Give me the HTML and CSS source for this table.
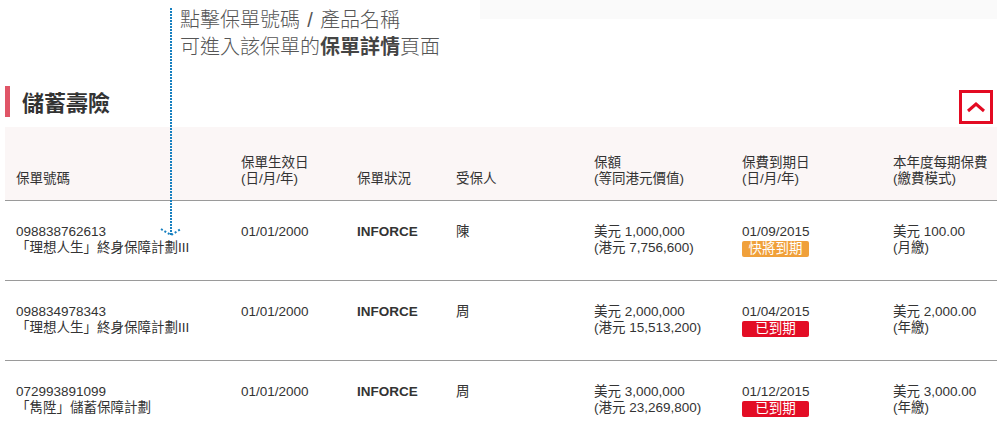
FILE: index.html
```html
<!DOCTYPE html>
<html lang="zh-Hant">
<head>
<meta charset="utf-8">
<title>儲蓄壽險</title>
<link rel="stylesheet" href="styles.css">
</head>
<body>
<div class="page">
  <div class="top-shade"></div>
  <div class="annotation">
    <div class="note">點擊保單號碼<span class="slash">/</span>產品名稱</div>
    <div class="note">可進入該保單的<b>保單詳情</b>頁面</div>
    <svg class="pointer" width="24" height="236" viewBox="0 0 24 236">
      <line x1="11" y1="2" x2="11" y2="229" stroke="#1780c0" stroke-width="2" stroke-dasharray="2 1"/>
      <polyline points="1,223 11,229 21,223" fill="none" stroke="#1780c0" stroke-width="2" stroke-dasharray="2 2"/>
    </svg>
  </div>

  <section class="section">
    <div class="section-head">
      <h2 class="title">儲蓄壽險</h2>
      <button class="toggle" aria-label="收起">
        <svg width="20" height="12" viewBox="0 0 20 12"><polyline points="2,10 10,3 18,10" fill="none" stroke="#e30b22" stroke-width="3"/></svg>
      </button>
    </div>

    <table class="policies">
      <colgroup>
        <col class="c1"><col class="c2"><col class="c3"><col class="c4"><col class="c5"><col class="c6"><col class="c7">
      </colgroup>
      <thead>
        <tr>
          <th>保單號碼</th>
          <th>保單生效日<br>(日/月/年)</th>
          <th>保單狀況</th>
          <th>受保人</th>
          <th>保額<br>(等同港元價值)</th>
          <th>保費到期日<br>(日/月/年)</th>
          <th>本年度每期保費<br>(繳費模式)</th>
        </tr>
      </thead>
      <tbody>
        <tr>
          <td>098838762613<br>「理想人生」終身保障計劃III</td>
          <td>01/01/2000</td>
          <td class="status">INFORCE</td>
          <td>陳</td>
          <td>美元 1,000,000<br>(港元 7,756,600)</td>
          <td>01/09/2015<span class="badge soon">快將到期</span></td>
          <td>美元 100.00<br>(月繳)</td>
        </tr>
        <tr>
          <td>098834978343<br>「理想人生」終身保障計劃III</td>
          <td>01/01/2000</td>
          <td class="status">INFORCE</td>
          <td>周</td>
          <td>美元 2,000,000<br>(港元 15,513,200)</td>
          <td>01/04/2015<span class="badge due">已到期</span></td>
          <td>美元 2,000.00<br>(年繳)</td>
        </tr>
        <tr>
          <td>072993891099<br>「雋陞」儲蓄保障計劃</td>
          <td>01/01/2000</td>
          <td class="status">INFORCE</td>
          <td>周</td>
          <td>美元 3,000,000<br>(港元 23,269,800)</td>
          <td>01/12/2015<span class="badge due">已到期</span></td>
          <td>美元 3,000.00<br>(年繳)</td>
        </tr>
      </tbody>
    </table>
  </section>
</div>
</body>
</html>
```

FILE: styles.css
```css
html, body {
  margin: 0;
  padding: 0;
  background: #fff;
}

body {
  font-family: "Liberation Sans", "Noto Sans CJK TC", sans-serif;
  font-size: 13.5px;
  color: #333;
  overflow: hidden;
}

.page {
  position: relative;
  padding-left: 5px;
  width: 992px;
}

.top-shade {
  position: absolute;
  left: 480px;
  top: 0;
  width: 517px;
  height: 19px;
  background: #fafafa;
}

.annotation {
  position: relative;
  padding: 5px 0 0 175px;
  font-family: "Noto Sans CJK TC", sans-serif;
  font-size: 20px;
  font-weight: 300;
  line-height: 27px;
  color: #555;
}

.note {
  height: 27px;
}

.slash {
  display: inline-block;
  width: 20px;
  text-align: center;
  font-family: "Liberation Sans", sans-serif;
}

.note b {
  font-weight: 700;
  color: #444;
}

.pointer {
  position: absolute;
  left: 155px;
  top: 6px;
}

.section {
  margin-top: 27px;
}

.section-head {
  display: flex;
  justify-content: space-between;
  align-items: flex-start;
  height: 38px;
  margin-bottom: 3px;
}

.title {
  margin: 0;
  height: 31px;
  border-left: 5px solid #e05567;
  padding-left: 12px;
  font-family: "Noto Sans CJK TC", sans-serif;
  font-size: 22px;
  font-weight: 700;
  line-height: 31px;
  color: #333;
}

.toggle {
  margin: 4px 4px 0 0;
  width: 34px;
  height: 34px;
  border: 3px solid #e30b22;
  background: #fff;
  padding: 0;
  display: flex;
  align-items: center;
  justify-content: center;
}

.policies {
  width: 992px;
  border-collapse: collapse;
  table-layout: fixed;
}

.c1 { width: 225px; }
.c2 { width: 116px; }
.c3 { width: 99px; }
.c4 { width: 138px; }
.c5 { width: 148px; }
.c6 { width: 151px; }
.c7 { width: 115px; }

.policies th {
  background: #fbf6f6;
  text-align: left;
  font-weight: 400;
  vertical-align: bottom;
  padding: 28px 0 13px 11px;
  line-height: 16px;
  color: #333;
  border-bottom: 1px solid #9a9a9a;
}

.policies td {
  vertical-align: top;
  padding: 23px 0 23px 11px;
  line-height: 16px;
  border-bottom: 1px solid #9a9a9a;
  white-space: nowrap;
}

.policies td.status {
  font-weight: 700;
}

.badge {
  display: block;
  width: 67px;
  height: 16px;
  margin-top: 1px;
  line-height: 16px;
  text-align: center;
  color: #fff;
  border-radius: 2px;
}

.badge.soon {
  background: #f0a03a;
}

.badge.due {
  background: #e30d25;
}
```
